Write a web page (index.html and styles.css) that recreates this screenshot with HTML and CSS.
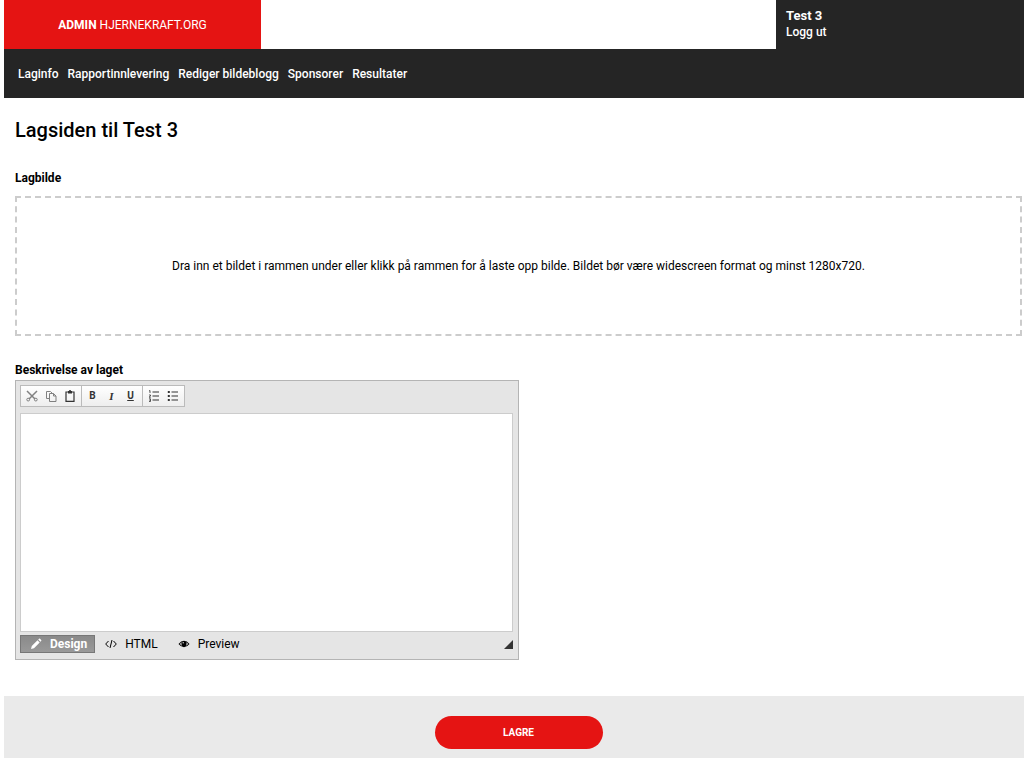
FILE: index.html
```html
<!DOCTYPE html>
<html lang="no">
<head>
<meta charset="utf-8">
<meta name="viewport" content="width=device-width, initial-scale=1">
<title>Admin Hjernekraft.org</title>
<link rel="stylesheet" href="styles.css">
</head>
<body>
<header class="topbar">
  <a class="brand" href="#"><span><strong>ADMIN</strong> HJERNEKRAFT.ORG</span></a>
  <div class="account">
    <strong class="account-name">Test 3</strong>
    <a class="logout" href="#">Logg ut</a>
  </div>
</header>
<nav class="menu">
  <a href="#">Laginfo</a>
  <a href="#">Rapportinnlevering</a>
  <a href="#">Rediger bildeblogg</a>
  <a href="#">Sponsorer</a>
  <a href="#">Resultater</a>
</nav>
<main class="content">
  <h1 class="title">Lagsiden til Test 3</h1>
  <h2 class="label">Lagbilde</h2>
  <button class="dropzone" type="button">Dra inn et bildet i rammen under eller klikk på rammen for å laste opp bilde. Bildet bør være widescreen format og minst 1280x720.</button>
  <label class="label" for="description">Beskrivelse av laget</label>
  <div class="editor">
    <div class="toolbar">
      <div class="group">
        <button class="tool" type="button" aria-label="Klipp ut">
          <svg class="faded" viewBox="0 0 12 12"><g fill="none" stroke="currentColor"><path d="M1 1l8 8M11 1L3 9" stroke-width="1.5"/><circle cx="2.2" cy="9.6" r="1.4"/><circle cx="9.8" cy="9.6" r="1.4"/></g></svg>
        </button>
        <button class="tool" type="button" aria-label="Kopier">
          <svg class="faded" viewBox="0 0 12 12"><g fill="none" stroke="currentColor"><path d="M4 8.5H1.5v-7h4l2 2"/><path d="M4.5 3.5h4l2.500 2.500v5.500h-6.500zM8.500 3.500v2.500h2.500"/></g></svg>
        </button>
        <button class="tool" type="button" aria-label="Lim inn">
          <svg viewBox="0 0 12 12"><path d="M2 2h8v9.400H2z" fill="none" stroke="currentColor" stroke-width="1.2"/><path d="M4 1h1.200V0h1.600v1H8v2.500H4z" fill="currentColor"/></svg>
        </button>
      </div>
      <div class="group">
        <button class="tool" type="button">B</button>
        <button class="tool italic" type="button">I</button>
        <button class="tool underline" type="button">U</button>
      </div>
      <div class="group">
        <button class="tool" type="button" aria-label="Nummerert liste">
          <svg viewBox="0 0 12 12"><path d="M4.500 2H11M4.500 6H11M4.500 10H11" stroke="currentColor" stroke-width="1.2"/><path d="M1 1l1-.5V3M1 5h1.500v1L1 7.200h1.800M1 8.800h1.500v2.700H1M1.300 10.200h1.200" fill="none" stroke="currentColor" stroke-width=".8"/></svg>
        </button>
        <button class="tool" type="button" aria-label="Punktliste">
          <svg viewBox="0 0 12 12"><path d="M4.500 2H11M4.500 6H11M4.500 10H11" stroke="currentColor" stroke-width="1.2"/><path d="M.8 1h2v2h-2zM.8 5h2v2h-2zM.8 9h2v2h-2z" fill="currentColor"/></svg>
        </button>
      </div>
    </div>
    <textarea class="text" id="description"></textarea>
    <div class="modes">
      <button class="mode active" type="button"><svg viewBox="0 0 12 12"><path d="M1 11l.8-3L7.500 2.300l2.200 2.200L4 10.200zM8.200 1.600l.8-.8q.5-.4 1 0l1.200 1.200q.4.500 0 1l-.8.8z" fill="currentColor"/></svg>Design</button>
      <button class="mode" type="button"><svg viewBox="0 0 12 12"><path d="M3.500 3L.7 6l2.800 3M8.500 3l2.800 3-2.800 3M7 2L5 10" fill="none" stroke="currentColor"/></svg>HTML</button>
      <button class="mode" type="button"><svg viewBox="0 0 12 12"><path d="M.5 6Q3 2.800 6 2.800T11.500 6Q9 9.200 6 9.200T.5 6z" fill="currentColor"/><path d="M2 6q.5-1.200 1.600-1.800Q3 6 4 7.800 2.600 7.200 2 6zM10 6q-.5-1.200-1.600-1.800Q9 6 8 7.800 9.400 7.200 10 6z" fill="#e5e5e5"/><circle cx="5.200" cy="4.800" r=".7" fill="#e5e5e5"/></svg>Preview</button>
      <svg class="grip" viewBox="0 0 10 10"><path d="M10 0v10H0z" fill="currentColor"/></svg>
    </div>
  </div>
</main>
<footer class="actions">
  <button class="save" type="button">LAGRE</button>
</footer>
</body>
</html>
```
FILE: styles.css
```css
* { box-sizing: border-box; }

body {
  margin: 0 0 0 4px;
  min-height: 100vh;
  display: flex;
  flex-direction: column;
  background: #fff;
  color: #000;
  font: 12px/16px Roboto, "Liberation Sans", sans-serif;
}

button { margin: 0; padding: 0; border: 0; background: none; color: inherit; font: inherit; cursor: pointer; }
a { color: inherit; text-decoration: none; }
svg { display: block; flex: none; width: 12px; height: 12px; }

.topbar { display: grid; grid-template-columns: 257fr 515fr 248fr; }
.brand { display: flex; align-items: center; justify-content: center; height: 49px; background: #e51413; color: #fff; }
.brand strong { font-weight: 700; }
.account { grid-column: 3; display: flex; flex-direction: column; padding: 8px 10px; background: #252525; color: #fff; font-weight: 500; }
.account-name { font-size: 13px; font-weight: 700; }

.menu { display: flex; align-items: center; gap: 9px; height: 49px; padding: 0 14px; background: #252525; color: #fff; font-weight: 500; }

.content { display: flex; flex-direction: column; padding: 20px 2px 36px 11px; }
.title { margin: 0 0 28px; font-size: 20px; line-height: 24px; font-weight: 500; }
.label { margin: 0; padding-bottom: 2px; font-size: 12px; line-height: 16px; font-weight: 700; }
.dropzone { min-height: 140px; margin: 8px 0 26px; padding: 16px; border: 2px dashed #ccc; font-size: 12px; }

.editor { width: 50%; display: flex; flex-direction: column; padding: 4px 5px 6px 4px; border: 1px solid #b4b4b4; background: #e5e5e5; }
.toolbar { display: flex; margin-bottom: 6px; }
.group { display: flex; align-items: center; height: 22px; padding: 0 2px 0 1px; border: 1px solid #bbb; background: linear-gradient(#fff, #eee); }
.group + .group { margin-left: -1px; }
.tool { display: flex; align-items: center; justify-content: center; width: 19px; height: 20px; color: #333; font-size: 10px; font-weight: 700; }
.faded { opacity: .6; }
.italic { font-family: "Liberation Serif", serif; font-style: italic; font-size: 11px; }
.underline { text-decoration: underline; }
.text { display: block; width: 100%; height: 219px; padding: 8px; border: 1px solid #ccc; background: #fff; font: inherit; resize: none; }
.modes { display: flex; align-items: center; margin-top: 3px; }
.mode { display: flex; align-items: center; gap: 8px; height: 18px; padding: 0 10px; font-size: 12px; }
.active { padding: 0 7px 0 9px; border: 1px solid #777; background: linear-gradient(#8a8a8a, #999); color: #fff; font-weight: 700; }
.grip { width: 9px; height: 9px; margin-left: auto; color: #333; }

.actions { flex: 1; display: flex; align-items: flex-start; justify-content: center; padding: 20px 2px 10px 11px; background: #eaeaea; }
.save { width: 168px; height: 33px; border-radius: 17px; background: #e51413; color: #fff; font-size: 10px; font-weight: 700; }
```
